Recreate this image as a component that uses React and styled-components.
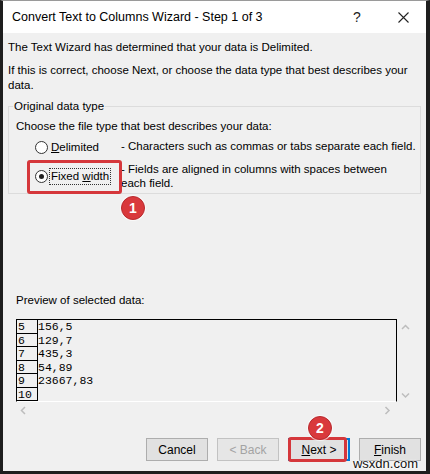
import React from 'react';
import styled, { createGlobalStyle } from 'styled-components';

const GlobalStyle = createGlobalStyle`
	html, body { margin: 0; padding: 0; background: #fff; }
	body { font-family: "Liberation Sans", Arial, sans-serif; color: #000; }
	* { box-sizing: border-box; }
`;

const Window = styled.div`
	position: relative;
	width: 430px;
	height: 474px;
	display: flex;
	flex-direction: column;
	background: #f0f0f0;
	border-top: 1px solid #9a9a9a;
	border-left: 3px solid #1e1e1e;
	border-right: 4px solid #1e1e1e;
	border-bottom: 3px solid #1e1e1e;
	overflow: hidden;
`;

const TitleBar = styled.div`
	height: 32px;
	flex: none;
	display: flex;
	align-items: center;
	background: #fff;
	padding-left: 9px;
`;

const Title = styled.div`
	flex: 1;
	font-size: 12.5px;
`;

const TitleButton = styled.div`
	width: 46px;
	height: 32px;
	display: flex;
	align-items: center;
	justify-content: center;
	font-size: 14px;
	color: #222;
`;

const Body = styled.div`
	flex: 1;
	display: flex;
	flex-direction: column;
	padding: 0 5px;
	font-size: 11.5px;
`;

const Text = styled.p`
	margin: ${p => p.mt || 0}px 0 0 ${p => p.ml || 0}px;
	line-height: 15px;
	white-space: nowrap;
`;

const Group = styled.fieldset`
	margin: 6px 0 0;
	padding: 5px 2px 3px 7px;
	border: 1px solid #dcdcdc;
	min-width: 0;
`;

const Legend = styled.legend`
	padding: 0 1px;
	margin-left: -3px;
	line-height: 15px;
`;

const Options = styled.div`
	display: grid;
	grid-template-columns: 86px 1fr;
	row-gap: 6px;
	margin: 5px 0 0 19px;
`;

const OptionLabel = styled.div`
	position: relative;
	display: flex;
	align-items: center;
`;

const Radio = styled.span`
	width: 13px;
	height: 13px;
	flex: none;
	border: 1px solid #333;
	border-radius: 50%;
	background: #fff;
	margin-right: 1px;
	display: flex;
	align-items: center;
	justify-content: center;
	&::after {
		content: '';
		width: 5px;
		height: 5px;
		border-radius: 50%;
		background: ${p => (p.checked ? '#222' : 'transparent')};
	}
`;

const Caption = styled.span`
	padding: 0 1px;
	line-height: 15px;
	white-space: nowrap;
	border: 1px dotted ${p => (p.focused ? '#333' : 'transparent')};
`;

const Description = styled.div`
	line-height: 14px;
	white-space: nowrap;
`;

const Highlight = styled.div`
	position: absolute;
	left: -8px;
	right: -1px;
	top: -2px;
	bottom: -4px;
	border: 3px solid #d5373b;
	border-radius: 3px;
	pointer-events: none;
`;

const Preview = styled.div`
	display: grid;
	grid-template-columns: 381px 16px;
	grid-template-rows: 83px 16px;
	margin: 11px 0 0 8px;
`;

const Grid = styled.div`
	border: 1px solid #000;
	border-bottom-color: #fff;
	overflow: hidden;
	font-family: "Liberation Mono", "Courier New", monospace;
	font-size: 11.5px;
`;

const Row = styled.div`
	display: flex;
	height: 13.5px;
	line-height: 13.5px;
`;

const RowNum = styled.div`
	width: 21px;
	flex: none;
	padding-left: 1px;
	border-right: 1px solid #000;
	border-bottom: 1px solid #000;
`;

const Cell = styled.div`
	padding-left: 0;
`;

const ScrollV = styled.div`
	display: flex;
	flex-direction: column;
	justify-content: space-between;
	align-items: center;
	padding: 5px 0 3px 1px;
`;

const ScrollH = styled.div`
	display: flex;
	justify-content: space-between;
	align-items: center;
	padding: 0 6px 0 4px;
`;

const Buttons = styled.div`
	display: flex;
	justify-content: flex-end;
	gap: 9px;
	margin-top: 20px;
`;

const ButtonWrap = styled.div`
	position: relative;
`;

const Button = styled.div`
	width: 62px;
	height: 23px;
	display: flex;
	align-items: center;
	justify-content: center;
	font-size: 12px;
	background: ${p => (p.disabled ? '#e6e6e6' : '#e1e1e1')};
	border: ${p => (p.primary ? '2px solid #0078d7' : `1px solid ${p.disabled ? '#c2c2c2' : '#adadad'}`)};
	color: ${p => (p.disabled ? '#a3a3a3' : '#000')};
`;

const ButtonHighlight = styled(Highlight)`
	left: 0;
	right: 3px;
	top: -1px;
	bottom: -1px;
`;

const Badge = styled.div`
	position: absolute;
	left: ${p => p.x - 12}px;
	top: ${p => p.y - 12}px;
	width: 24px;
	height: 24px;
	border-radius: 50%;
	background: #d9393c;
	border: 1px solid #b82a2e;
	color: #fff;
	font-weight: bold;
	font-size: 14px;
	display: flex;
	align-items: center;
	justify-content: center;
	box-shadow: 0 0 0 1px rgba(255, 255, 255, 0.6);
`;

const Watermark = styled.div`
	position: absolute;
	right: 8px;
	bottom: 0;
	font-size: 13px;
	color: #111;
	text-shadow: 0 0 2px #fff, 0 0 2px #fff, 0 0 3px #fff;
`;

const Chevron = ({ dir }) => {
	const pts = {
		up: '1,5 4.5,1.5 8,5',
		down: '1,1.5 4.5,5 8,1.5',
		left: '5,1 1.5,4.5 5,8',
		right: '1.5,1 5,4.5 1.5,8',
	}[dir];
	const vertical = dir === 'up' || dir === 'down';
	return (
		<svg width={vertical ? 9 : 7} height={vertical ? 7 : 9} viewBox={vertical ? '0 0 9 7' : '0 0 7 9'}>
			<polyline points={pts} fill="none" stroke="#bdbdbd" strokeWidth="1.5" />
		</svg>
	);
};

const rows = [
	['5', '156,5'],
	['6', '129,7'],
	['7', '435,3'],
	['8', '54,89'],
	['9', '23667,83'],
	['10', ''],
];

const App = () => (
	<>
		<GlobalStyle />
		<Window>
			<TitleBar>
				<Title>Convert Text to Columns Wizard - Step 1 of 3</Title>
				<TitleButton>?</TitleButton>
				<TitleButton>
					<svg width="11" height="11" viewBox="0 0 11 11">
						<path d="M0.5 0.5 L10.5 10.5 M10.5 0.5 L0.5 10.5" stroke="#222" strokeWidth="1.1" />
					</svg>
				</TitleButton>
			</TitleBar>
			<Body>
				<Text mt={7}>The Text Wizard has determined that your data is Delimited.</Text>
				<Text mt={8}>
					If this is correct, choose Next, or choose the data type that best describes your
					<br />
					data.
				</Text>
				<Group>
					<Legend>Original data type</Legend>
					<Text>Choose the file type that best describes your data:</Text>
					<Options>
						<OptionLabel>
							<Radio />
							<Caption><u>D</u>elimited</Caption>
						</OptionLabel>
						<Description>- Characters such as commas or tabs separate each field.</Description>
						<OptionLabel>
							<Radio checked />
							<Caption focused>Fixed <u>w</u>idth</Caption>
							<Highlight />
						</OptionLabel>
						<Description>- Fields are aligned in columns with spaces between<br />each field.</Description>
					</Options>
				</Group>
				<Text mt={99} ml={8}>Preview of selected data:</Text>
				<Preview>
					<Grid>
						{rows.map(([num, value]) => (
							<Row key={num}>
								<RowNum>{num}</RowNum>
								<Cell>{value}</Cell>
							</Row>
						))}
					</Grid>
					<ScrollV>
						<Chevron dir="up" />
						<Chevron dir="down" />
					</ScrollV>
					<ScrollH>
						<Chevron dir="left" />
						<Chevron dir="right" />
					</ScrollH>
				</Preview>
				<Buttons>
					<Button>Cancel</Button>
					<Button disabled>&lt; Back</Button>
					<ButtonWrap>
						<Button primary><span><u>N</u>ext &gt;</span></Button>
						<ButtonHighlight />
					</ButtonWrap>
					<Button><span><u>F</u>inish</span></Button>
				</Buttons>
			</Body>
			<Badge x={130} y={207}>1</Badge>
			<Badge x={317} y={427}>2</Badge>
			<Watermark>wsxdn.com</Watermark>
		</Window>
	</>
);

export default App;
